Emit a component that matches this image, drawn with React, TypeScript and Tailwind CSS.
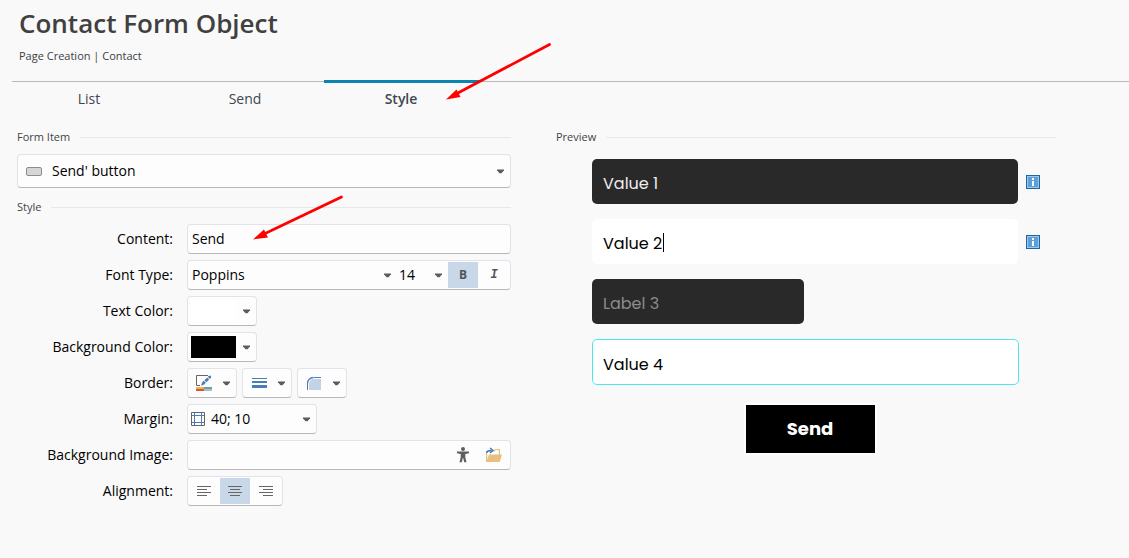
import { useState, type ReactNode } from 'react';
import clsx from 'clsx';

const box = 'rounded-[4px] border border-[#e0e4e8] border-b-[#b9b9b9] bg-[#fdfdfd]';

function Caret({ className }: { className?: string }) {
  return (
    <svg width="8" height="5" viewBox="0 0 8 5" className={clsx('shrink-0 pointer-events-none', className)} fill="#5c5c5c" aria-hidden="true">
      <path d="M1 .5h7v.8L5.5 4.2h-2L1 1.3z" />
    </svg>
  );
}

function SectionTitle({ children }: { children: ReactNode }) {
  return (
    <div className="flex items-center gap-2.5">
      <h2 className="text-[11px] leading-4 text-[#444]">{children}</h2>
      <span className="h-px flex-1 bg-[#e8e8e8]" />
    </div>
  );
}

function Row({ label, htmlFor, children }: { label: string; htmlFor: string; children: ReactNode }) {
  return (
    <div className="flex items-center gap-3.5">
      <label htmlFor={htmlFor} className="w-[156px] shrink-0 text-right text-sm whitespace-nowrap">{label}</label>
      {children}
    </div>
  );
}

function BorderColorIcon() {
  return (
    <svg width="16" height="16" viewBox="0 0 16 16" aria-hidden="true">
      <path d="M12 .5H.5v10H4" fill="none" stroke="#666" />
      <path d="M5 10.7l1.2-3.4 1.6-1.5 2 2-1.6 1.6z" fill="#4a7db5" />
      <path d="M8.4 5.2l2.8-2.8 2 2-2.8 2.8z" fill="#4a7db5" />
      <path d="M11.8 1.8L13 .8h2v2l-1.2 1.1z" fill="#4a7db5" />
      <path fill="#e8b45c" d="M0 12h8v2H0z" />
      <path fill="#68a58d" d="M8 12h8v2H8z" />
      <path fill="#d9582b" d="M0 14h8v2H0z" />
      <path fill="#a3bfd8" d="M8 14h8v2H8z" />
    </svg>
  );
}

function BorderWidthIcon() {
  return (
    <svg width="16" height="16" viewBox="0 0 16 16" fill="#4a7db5" aria-hidden="true">
      <path d="M1 3h15v1H1zM1 6h15v2H1zM1 10h15v3H1z" />
    </svg>
  );
}

function CornerIcon() {
  return (
    <svg width="16" height="16" viewBox="0 0 16 16" aria-hidden="true">
      <path d="M3 15V9a5 5 0 0 1 5-5h7v11z" fill="#c3d3e7" />
      <path d="M1.5 8.5a6 6 0 0 1 6-6" fill="none" stroke="#4a7db5" strokeWidth="1.3" />
      <path d="M1.5 15V8M8 2.5h7" fill="none" stroke="#4a7db5" />
    </svg>
  );
}

function MarginIcon() {
  return (
    <svg width="14" height="14" viewBox="0 0 14 14" fill="none" aria-hidden="true">
      <path d="M3.5 1v12M10.5 1v12M1 3.5h12M1 10.5h12" stroke="#4a7db5" />
      <path d="M.5.5h13v13H.5z" stroke="#666" />
    </svg>
  );
}

function PersonIcon() {
  return (
    <svg width="12" height="16" viewBox="0 0 12 16" fill="#5e5e5e" aria-hidden="true">
      <circle cx="6" cy="2" r="2" />
      <path d="M0 4.6h12v1.6l-3.7.8v3.2l1.2 5H7.2L6.2 11h-.4l-1 4.2H2.5l1.2-5V7L0 6.2z" />
    </svg>
  );
}

function FolderIcon() {
  return (
    <svg width="16" height="16" viewBox="0 0 16 16" aria-hidden="true">
      <path d="M.6 15V6M7.5 4.5L9.5 2.5h3.9V8" fill="none" stroke="#e8c081" strokeWidth="1.2" />
      <path d="M3 7.5h13L13.8 15H.3z" fill="#e8c081" />
      <path d="M.6 6C.8 4.4 2 3.5 5.5 3.5" fill="none" stroke="#3c79b4" strokeWidth="1.6" />
      <path d="M4 1l3 2.5L4 6" fill="none" stroke="#3c79b4" strokeWidth="1.4" />
    </svg>
  );
}

const alignPaths: Record<string, string> = {
  left: 'M0 1.5h14M0 4.5h10M0 7.5h14M0 10.5h10',
  center: 'M0 1.5h14M2 4.5h10M0 7.5h14M2 10.5h10',
  right: 'M0 1.5h14M4 4.5h10M0 7.5h14M4 10.5h10',
};

function InfoButton() {
  return (
    <button type="button" aria-label="Info" className="shrink-0">
      <svg width="14" height="14" viewBox="0 0 14 14" aria-hidden="true" className="block">
        <path fill="#22659b" d="M0 0h14v14H0z" />
        <path fill="#9cc7ee" d="M1 1h12v12H1z" />
        <path fill="#5b9fdb" d="M2 2h10v10H2z" />
        <path fill="#fff" d="M6 3h2v2H6zM6 6h2v5H6z" />
      </svg>
    </button>
  );
}

const previewFont = "font-['Poppins','Inter',sans-serif]";
const field = 'min-w-0 rounded-[5px] border px-2.5 pt-1 text-base outline-none';

function Preview() {
  return (
    <section>
      <SectionTitle>Preview</SectionTitle>
      <div className={clsx('mt-3.5 flex flex-col gap-[15px] pr-4 pl-9', previewFont)}>
        <div className="flex items-center gap-2">
          <input aria-label="Label 1" defaultValue="Value 1" className={clsx(field, 'h-[45px] flex-1 border-transparent bg-[#292929] text-[#eee]')} />
          <InfoButton />
        </div>
        <div className="flex items-center gap-2">
          <div className="relative flex flex-1">
            <input aria-label="Label 2" defaultValue="Value 2" className={clsx(field, 'h-[45px] flex-1 border-transparent bg-white text-black')} />
            <span className="absolute top-3.5 left-[71px] h-[19px] w-px bg-black" />
          </div>
          <InfoButton />
        </div>
        <input aria-label="Label 3" placeholder="Label 3" className={clsx(field, 'h-[45px] w-[212px] border-transparent bg-[#292929] placeholder:text-[#8c8c8c]')} />
        <div className="flex pr-[21px]">
          <input aria-label="Label 4" defaultValue="Value 4" className={clsx(field, 'h-[46px] flex-1 border-[#4fe8e8] bg-white text-black')} />
        </div>
        <div className="mt-[5px] flex justify-center pr-3">
          <button type="button" className="h-12 w-[129px] bg-black text-lg font-bold text-white outline-2 outline-white">Send</button>
        </div>
      </div>
    </section>
  );
}

function StyleForm() {
  const [bold, setBold] = useState(true);
  const [italic, setItalic] = useState(false);
  const [align, setAlign] = useState('center');

  return (
    <div>
      <SectionTitle>Form Item</SectionTitle>
      <div className={clsx(box, 'relative mt-[9px] h-[34px] border-b-[#1786ae]')}>
        <span className="pointer-events-none absolute top-3 left-2 h-[9px] w-4 rounded-xs border border-[#8c8c8c] bg-[#d6d6d6]" />
        <select aria-label="Form Item" className="h-full w-full appearance-none pl-[34px] text-sm outline-none">
          <option>Send' button</option>
        </select>
        <Caret className="absolute top-3.5 right-1.5" />
      </div>

      <div className="mt-[11px]">
        <SectionTitle>Style</SectionTitle>
      </div>

      <div className="mt-[9px] flex flex-col gap-1.5">
        <Row label="Content:" htmlFor="content">
          <input id="content" defaultValue="Send" className={clsx(box, 'h-[30px] min-w-0 flex-1 px-1 pb-0.5 text-sm outline-none')} />
        </Row>

        <Row label="Font Type:" htmlFor="font">
          <div className={clsx(box, 'flex h-[30px] min-w-0 flex-1 items-center')}>
            <div className="relative flex min-w-0 flex-1 items-center">
              <select id="font" className="w-full appearance-none pl-1 text-sm outline-none">
                <option>Poppins</option>
              </select>
              <Caret className="absolute right-0" />
            </div>
            <div className="relative flex w-[51px] items-center">
              <select aria-label="Font size" className="w-full appearance-none pl-2 text-sm outline-none">
                <option>14</option>
              </select>
              <Caret className="absolute right-0" />
            </div>
            <button
              type="button"
              aria-pressed={bold}
              onClick={() => setBold(!bold)}
              className={clsx('ml-1.5 h-[26px] w-[30px] text-xs font-bold text-[#555]', bold && 'bg-[#c8d8e8]')}
            >
              B
            </button>
            <button
              type="button"
              aria-pressed={italic}
              onClick={() => setItalic(!italic)}
              className={clsx("h-[26px] w-8 font-['Liberation_Mono',monospace] text-xs font-bold text-[#555] italic", italic && 'bg-[#c8d8e8]')}
            >
              I
            </button>
          </div>
        </Row>

        <Row label="Text Color:" htmlFor="text-color">
          <button id="text-color" type="button" className={clsx(box, 'flex h-[30px] w-[70px] items-center gap-1.5 pl-[3px]')}>
            <span className="h-[22px] w-[45px] bg-white" />
            <Caret />
          </button>
        </Row>

        <Row label="Background Color:" htmlFor="bg-color">
          <button id="bg-color" type="button" className={clsx(box, 'flex h-[30px] w-[70px] items-center gap-1.5 pl-[3px]')}>
            <span className="h-[22px] w-[45px] bg-black" />
            <Caret />
          </button>
        </Row>

        <Row label="Border:" htmlFor="border-color">
          <div className="flex gap-[5px]">
            <button id="border-color" type="button" aria-label="Border color" className={clsx(box, 'flex h-[30px] w-[50px] items-center gap-2.5 pl-2')}>
              <BorderColorIcon />
              <Caret />
            </button>
            <button type="button" aria-label="Border width" className={clsx(box, 'flex h-[30px] w-[50px] items-center gap-2.5 pl-2')}>
              <BorderWidthIcon />
              <Caret />
            </button>
            <button type="button" aria-label="Border radius" className={clsx(box, 'flex h-[30px] w-[50px] items-center gap-2.5 pl-2')}>
              <CornerIcon />
              <Caret />
            </button>
          </div>
        </Row>

        <Row label="Margin:" htmlFor="margin">
          <div className={clsx(box, 'relative flex h-[30px] w-[130px] items-center gap-1.5 pl-[3px]')}>
            <MarginIcon />
            <select id="margin" className="min-w-0 flex-1 appearance-none text-sm outline-none">
              <option>40; 10</option>
            </select>
            <Caret className="absolute right-1.5" />
          </div>
        </Row>

        <Row label="Background Image:" htmlFor="bg-image">
          <div className={clsx(box, 'flex h-[30px] min-w-0 flex-1 items-center gap-[17px] pr-2')}>
            <input id="bg-image" className="min-w-0 flex-1 px-1 text-sm outline-none" />
            <button type="button" aria-label="Accessibility">
              <PersonIcon />
            </button>
            <button type="button" aria-label="Browse">
              <FolderIcon />
            </button>
          </div>
        </Row>

        <Row label="Alignment:" htmlFor="align-left">
          <div className={clsx(box, 'flex h-[30px] w-24 items-center px-px')}>
            {['left', 'center', 'right'].map((side) => (
              <button
                key={side}
                id={`align-${side}`}
                type="button"
                aria-label={`Align ${side}`}
                aria-pressed={align === side}
                onClick={() => setAlign(side)}
                className={clsx('flex h-[26px] flex-1 items-center justify-center', align === side && 'bg-[#c8d8e8]')}
              >
                <svg width="14" height="12" viewBox="0 0 14 12" stroke="#666" aria-hidden="true">
                  <path d={alignPaths[side]} />
                </svg>
              </button>
            ))}
          </div>
        </Row>
      </div>
    </div>
  );
}

const tabs = ['List', 'Send', 'Style'];

export default function App() {
  const [tab, setTab] = useState('Style');

  return (
    <main className="relative min-h-screen bg-[#f9f9f9] font-['Segoe_UI','Open_Sans',sans-serif] text-black">
      <header className="px-[19px] pt-[5px]">
        <h1 className="text-[26px] leading-9 font-semibold text-[#404040]">Contact Form Object</h1>
        <p className="mt-[5px] text-[11px] leading-5 text-[#404040]">Page Creation | Contact</p>
      </header>

      <nav className="mt-[15px] ml-3 flex border-t border-[#b9b9b9]">
        {tabs.map((name) => (
          <button
            key={name}
            type="button"
            onClick={() => setTab(name)}
            className={clsx(
              '-mt-0.5 w-[156px] border-t-3 pr-0.5 text-sm leading-8 text-[#3f4750]',
              tab === name ? 'border-[#0b84b0] font-semibold' : 'border-transparent'
            )}
          >
            {name}
          </button>
        ))}
      </nav>

      <div className="mt-3.5 grid grid-cols-[494fr_500fr] gap-[45px] pr-[73px] pl-[17px]">
        <StyleForm />
        <Preview />
      </div>

      {/* Callout arrows */}
      <svg width="560" height="250" viewBox="0 0 560 250" className="pointer-events-none absolute top-0 left-0" aria-hidden="true">
        <g stroke="#f00" strokeWidth="2.8" strokeLinecap="round">
          <path d="M549.5 44.5L456 94" />
          <path d="M341.5 197L263 234.5" />
        </g>
        <path d="M446 99.5L456.5 89.5L460.5 97z" fill="#f00" />
        <path d="M253 239.5L264 229.5L268 237.5z" fill="#f00" />
      </svg>
    </main>
  );
}
